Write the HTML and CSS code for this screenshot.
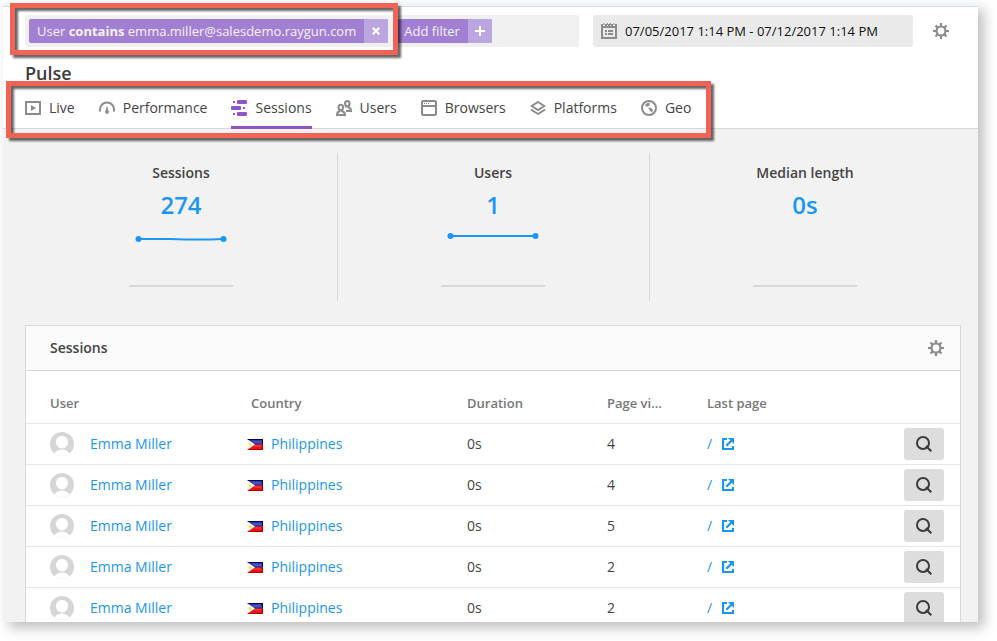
FILE: index.html
```html
<!DOCTYPE html>
<html lang="en">
<head>
  <meta charset="UTF-8" />
  <title>Pulse - Sessions</title>
  <link rel="stylesheet" href="styles.css">
</head>
<body>
  <!-- shared icons -->
  <svg class="sprite" aria-hidden="true">
    <symbol id="gear" viewBox="0 0 16 16">
      <circle cx="8" cy="8" r="4.500" fill="none" stroke="currentColor" stroke-width="2.200" />
      <path d="M8 0v3.500M8 12.500V16M0 8h3.500M12.500 8H16M2.500 2.500l2.300 2.300M11.200 11.200l2.300 2.300M13.500 2.500l-2.300 2.300M4.800 11.200l-2.300 2.300" stroke="currentColor" stroke-width="2.200" />
    </symbol>
    <symbol id="avatar" viewBox="0 0 24 24">
      <circle cx="12" cy="12" r="12" fill="#d6d6d6" />
      <path d="M12 4c3.600 0 6 2.500 6 6s-2.600 6.500-6 6.500S6 13.500 6 10s2.400-6 6-6z" fill="#fff" />
      <path d="M4.500 21.400C6.500 18.600 9 17.500 12 17.500s5.500 1.100 7.500 3.900A12 12 0 0 1 12 24a12 12 0 0 1-7.500-2.600z" fill="#fff" />
    </symbol>
    <symbol id="flag" viewBox="0 0 16 11">
      <path d="M0 0h16v6H0z" fill="#3338a4" />
      <path d="M0 0h16v1H0zM15 0h1v5.500h-1z" fill="#000066" />
      <path d="M0 5.500h16V11H0z" fill="#ee1111" />
      <path d="M1 10h15v1H1zM15 5.500h1V11h-1z" fill="#b80000" />
      <path d="M6 2.500h8v1H6z" fill="#6468c0" />
      <path d="M7 6.500h7v1H7z" fill="#ff5050" />
      <path d="M0 0l8 5.500L0 11z" fill="#fbf9ee" />
      <path d="M1.500 5.500h3M3 4v3" stroke="#f2e456" stroke-width="1.500" />
    </symbol>
    <symbol id="external" viewBox="0 0 12 12">
      <path d="M5 1H1v10h10V8" fill="none" stroke="currentColor" stroke-width="2.200" />
      <path d="M4.300 7.700L9.500 2.500" stroke="currentColor" stroke-width="2.200" />
      <path d="M6 0h6v6z" fill="currentColor" />
    </symbol>
    <symbol id="search" viewBox="0 0 16 16">
      <circle cx="7" cy="7" r="6" fill="none" stroke="currentColor" stroke-width="2" />
      <path d="M10 10l5.300 5.300" stroke="currentColor" stroke-width="2" />
    </symbol>
  </svg>

  <div class="app">
    <header class="header">
      <div class="toolbar">
        <div class="filters">
          <span class="tag">
            <span class="tag-text">User <b>contains</b> emma.miller@salesdemo.raygun.com</span>
            <button class="tag-btn" aria-label="Remove filter">
              <svg width="8" height="8" viewBox="0 0 8 8"><path d="M.7.7l6.600 6.600M7.300.7L.7 7.300" stroke="#fff" stroke-width="2" /></svg>
            </button>
          </span>
          <button class="tag">
            <span class="tag-text">Add filter</span>
            <span class="tag-btn">
              <svg width="10" height="10" viewBox="0 0 10 10"><path d="M5 0v10M0 5h10" stroke="#fff" stroke-width="2" /></svg>
            </span>
          </button>
        </div>
        <button class="date">
          <svg width="16" height="16" viewBox="0 0 16 16">
            <path d="M0 1h2v2h2V1h2v2h1V1h2v2h1V1h2v2h2V1h2v15H0z" fill="#8c8c8c" />
            <path d="M3 0v2M6.500 0v2M9.500 0v2M13 0v2" stroke="#8c8c8c" stroke-width="1" />
            <path d="M2 5h12v9H2z" fill="#eaeaea" />
            <path d="M4 8h2M7 8h5M4 11h2M7 11h5" stroke="#8c8c8c" stroke-width="2" />
          </svg>
          07/05/2017 1:14 PM - 07/12/2017 1:14 PM
        </button>
        <button class="icon-btn" aria-label="Settings"><svg width="16" height="16"><use href="#gear" /></svg></button>
      </div>

      <h1>Pulse</h1>

      <nav class="tabs">
        <a href="#">
          <svg width="16" height="16" viewBox="0 0 16 16"><path d="M1 2h14v12H1z" fill="none" stroke="currentColor" stroke-width="2" /><path d="M6 5l5 3-5 3z" fill="currentColor" /></svg>
          Live
        </a>
        <a href="#">
          <svg width="16" height="16" viewBox="0 0 16 16"><path d="M1 11.500V9.500a7 7 0 0 1 14 0v2" fill="none" stroke="currentColor" stroke-width="2" /><path d="M8 5.500l1.300 5a1.900 1.900 0 1 1-2.600 0z" fill="currentColor" /></svg>
          Performance
        </a>
        <a href="#" class="active">
          <svg width="16" height="16" viewBox="0 0 16 16">
            <rect x="6" y="0" width="10" height="4" rx="1" fill="currentColor" />
            <rect x="0" y="6" width="10" height="4" rx="1" fill="currentColor" />
            <rect x="6" y="12" width="10" height="4" rx="1" fill="currentColor" />
            <path d="M2 2h2M12 8h2M2 14h2" stroke="currentColor" stroke-width="2" />
          </svg>
          Sessions
        </a>
        <a href="#">
          <svg width="16" height="16" viewBox="0 0 16 16" fill="none" stroke="currentColor" stroke-width="2">
            <ellipse cx="11.300" cy="3.600" rx="2.300" ry="2.600" />
            <path d="M10 6.300v1.300M12.700 6.200v1.300c1.700.5 2.300 1 2.300 3.400H10" />
            <ellipse cx="4.800" cy="7.400" rx="2.300" ry="2.600" />
            <path d="M3.600 10v1.300C1.700 11.800 1 12.500 1 15h8c0-2.500-.8-3.200-2.800-3.700V10" />
          </svg>
          Users
        </a>
        <a href="#">
          <svg width="16" height="16" viewBox="0 0 16 16"><rect x="1" y="1" width="14" height="14" rx="1" fill="none" stroke="currentColor" stroke-width="2" /><path d="M1 6h14" stroke="currentColor" stroke-width="2" /><path d="M3 3.500h6" stroke="currentColor" stroke-width="1" stroke-dasharray="1 1" /></svg>
          Browsers
        </a>
        <a href="#">
          <svg width="16" height="16" viewBox="0 0 16 16" fill="none" stroke="currentColor" stroke-width="1.900"><path d="M8 2l6.300 4L8 10 1.700 6z" /><path d="M1 9.600l7 4.400 7-4.400" /></svg>
          Platforms
        </a>
        <a href="#">
          <svg width="16" height="16" viewBox="0 0 16 16"><circle cx="8" cy="8" r="7" fill="none" stroke="currentColor" stroke-width="2" /><path d="M4 5l2.500-2 3-.5L8 4l1 1-2.500 1.500L5 6.500zM7 7.500l3 .5 2.300 2-1.800 2.500L9 10.500z" fill="currentColor" /></svg>
          Geo
        </a>
      </nav>
    </header>

    <main>
      <section class="stats">
        <div class="stat">
          <h2>Sessions</h2>
          <p>274</p>
          <svg class="spark" viewBox="0 0 104 60">
            <path d="M9 14h32q30 1 53 0" fill="none" stroke="currentColor" stroke-width="2" />
            <circle cx="9.500" cy="14" r="3" fill="currentColor" /><circle cx="94.500" cy="14" r="3" fill="currentColor" />
          </svg>
        </div>
        <div class="stat">
          <h2>Users</h2>
          <p>1</p>
          <svg class="spark" viewBox="0 0 104 60">
            <path d="M9 11h85" stroke="currentColor" stroke-width="2" />
            <circle cx="9.500" cy="11" r="3" fill="currentColor" /><circle cx="94.500" cy="11" r="3" fill="currentColor" />
          </svg>
        </div>
        <div class="stat">
          <h2>Median length</h2>
          <p>0s</p>
          <svg class="spark" viewBox="0 0 104 60"></svg>
        </div>
      </section>

      <section class="panel">
        <div class="panel-head">
          <h2>Sessions</h2>
          <button class="icon-btn" aria-label="Table settings"><svg width="16" height="16"><use href="#gear" /></svg></button>
        </div>
        <table>
          <thead>
            <tr>
              <th class="user">User</th>
              <th class="country">Country</th>
              <th class="duration">Duration</th>
              <th class="views">Page vi...</th>
              <th>Last page</th>
              <td class="action"></td>
            </tr>
          </thead>
          <tbody>
            <tr>
              <td class="user"><a href="#"><svg width="24" height="24"><use href="#avatar" /></svg>Emma Miller</a></td>
              <td><a href="#" class="place"><svg width="16" height="11"><use href="#flag" /></svg>Philippines</a></td>
              <td>0s</td>
              <td>4</td>
              <td><a href="#" class="page">/<svg width="12" height="12"><use href="#external" /></svg></a></td>
              <td class="action"><button class="view" aria-label="View session"><svg width="16" height="16"><use href="#search" /></svg></button></td>
            </tr>
            <tr>
              <td class="user"><a href="#"><svg width="24" height="24"><use href="#avatar" /></svg>Emma Miller</a></td>
              <td><a href="#" class="place"><svg width="16" height="11"><use href="#flag" /></svg>Philippines</a></td>
              <td>0s</td>
              <td>4</td>
              <td><a href="#" class="page">/<svg width="12" height="12"><use href="#external" /></svg></a></td>
              <td class="action"><button class="view" aria-label="View session"><svg width="16" height="16"><use href="#search" /></svg></button></td>
            </tr>
            <tr>
              <td class="user"><a href="#"><svg width="24" height="24"><use href="#avatar" /></svg>Emma Miller</a></td>
              <td><a href="#" class="place"><svg width="16" height="11"><use href="#flag" /></svg>Philippines</a></td>
              <td>0s</td>
              <td>5</td>
              <td><a href="#" class="page">/<svg width="12" height="12"><use href="#external" /></svg></a></td>
              <td class="action"><button class="view" aria-label="View session"><svg width="16" height="16"><use href="#search" /></svg></button></td>
            </tr>
            <tr>
              <td class="user"><a href="#"><svg width="24" height="24"><use href="#avatar" /></svg>Emma Miller</a></td>
              <td><a href="#" class="place"><svg width="16" height="11"><use href="#flag" /></svg>Philippines</a></td>
              <td>0s</td>
              <td>2</td>
              <td><a href="#" class="page">/<svg width="12" height="12"><use href="#external" /></svg></a></td>
              <td class="action"><button class="view" aria-label="View session"><svg width="16" height="16"><use href="#search" /></svg></button></td>
            </tr>
            <tr>
              <td class="user"><a href="#"><svg width="24" height="24"><use href="#avatar" /></svg>Emma Miller</a></td>
              <td><a href="#" class="place"><svg width="16" height="11"><use href="#flag" /></svg>Philippines</a></td>
              <td>0s</td>
              <td>2</td>
              <td><a href="#" class="page">/<svg width="12" height="12"><use href="#external" /></svg></a></td>
              <td class="action"><button class="view" aria-label="View session"><svg width="16" height="16"><use href="#search" /></svg></button></td>
            </tr>
          </tbody>
        </table>
      </section>
    </main>
  </div>

  <!-- highlight boxes over the filter and the tabs -->
  <div class="callout callout-filter"></div>
  <div class="callout callout-tabs"></div>
</body>
</html>
```
FILE: styles.css
```css
* {
  box-sizing: border-box;
  margin: 0;
  padding: 0;
}

body {
  position: relative;
  height: 100vh;
  padding: 3px 19px 19px 3px;
  overflow: hidden;
  background: #fff;
  font-family: "Open Sans", "Noto Sans", sans-serif;
  font-size: 14px;
  line-height: 20px;
  color: #444;
}

a {
  color: #1a96ee;
  text-decoration: none;
}

button {
  border: none;
  background: none;
  font: inherit;
  color: inherit;
  cursor: pointer;
}

svg {
  display: block;
  flex: none;
}

.sprite {
  position: absolute;
  width: 0;
  height: 0;
}

.app {
  height: 100%;
  overflow: hidden;
  background: #f2f2f2;
  box-shadow: 6px 6px 12px rgba(0, 0, 0, 0.25);
}

/* header */
.header {
  padding: 0 22px;
  background: #fff;
  border-top: 3px solid #eef6ff;
  border-bottom: 1px solid #d8d8d8;
}

.toolbar {
  display: flex;
  align-items: center;
  margin: 0 -22px;
  padding: 8px 29px 0 22px;
  border-top: 1px solid #d8d8d8;
}

.filters {
  display: flex;
  flex: 1;
  gap: 8px;
  padding: 4px;
  background: #f0f0f0;
  border-radius: 3px;
}

.tag {
  display: flex;
  height: 24px;
  background: #a180d3;
  border-radius: 2px;
  overflow: hidden;
  color: #f6f2fc;
  font-size: 13px;
  line-height: 24px;
  white-space: nowrap;
}

.tag b {
  font-weight: 700;
}

.tag-text {
  padding: 0 8px;
}

.tag-btn {
  display: flex;
  align-items: center;
  justify-content: center;
  width: 24px;
  height: 24px;
  background: #bba6e0;
}

.date {
  display: flex;
  align-items: center;
  gap: 8px;
  width: 320px;
  height: 32px;
  margin: 0 20px 0 14px;
  padding: 0 8px;
  background: #eaeaea;
  border-radius: 3px;
  color: #111;
  font-size: 13px;
}

.icon-btn {
  color: #8c8c8c;
}

h1 {
  padding-top: 14px;
  font-size: 18px;
  font-weight: 600;
  line-height: 24px;
  color: #3b3b3b;
}

.tabs {
  display: flex;
  gap: 24px;
  margin-bottom: -1px;
}

.tabs a {
  display: flex;
  align-items: center;
  gap: 8px;
  height: 44px;
  padding-top: 5px;
  border-bottom: 3px solid transparent;
  color: #444;
}

.tabs svg {
  color: #8c8c8c;
}

.tabs .active {
  border-color: #9155cb;
}

.tabs .active svg {
  color: #9155cb;
}

/* stats */
main {
  padding: 24px 17px 0 22px;
}

.stats {
  display: grid;
  grid-template-columns: repeat(3, 1fr);
  margin-bottom: 24px;
}

.stat {
  display: flex;
  flex-direction: column;
  align-items: center;
  height: 148px;
  padding-top: 10px;
}

.stat + .stat {
  padding-right: 1px;
  border-left: 1px solid #d8d8d8;
}

h2 {
  font-size: 14px;
  font-weight: 600;
  color: #444;
}

.stat p {
  padding-top: 6px;
  font-size: 24px;
  font-weight: 600;
  line-height: 32px;
  color: #1a96f5;
}

.spark {
  width: 104px;
  height: 62px;
  margin-top: 4px;
  border-bottom: 2px solid #d8d8d8;
  color: #1a96f5;
}

/* sessions table */
.panel {
  background: #fff;
  border: 1px solid #d8d8d8;
}

.panel-head {
  display: flex;
  align-items: center;
  justify-content: space-between;
  height: 45px;
  padding: 0 16px 0 24px;
  background: #fbfbfb;
  border-bottom: 1px solid #d8d8d8;
}

table {
  width: 100%;
  table-layout: fixed;
  border-collapse: separate;
  border-spacing: 0;
}

th {
  height: 53px;
  padding-top: 12px;
  border-bottom: 1px solid #e6e6e6;
  text-align: left;
  font-size: 13px;
  font-weight: 600;
  color: #777;
}

td {
  height: 41px;
  border-bottom: 1px solid #e6e6e6;
}

td a {
  display: flex;
  align-items: center;
}

.user {
  width: 221px;
  padding-left: 24px;
}

.user a {
  gap: 16px;
}

.country {
  width: 220px;
  padding-left: 4px;
}

.place {
  gap: 8px;
}

.duration {
  width: 140px;
}

.views {
  width: 100px;
}

.page {
  gap: 10px;
}

.action {
  width: 80px;
  padding-right: 16px;
}

.view {
  display: flex;
  align-items: center;
  justify-content: center;
  width: 40px;
  height: 32px;
  margin-left: auto;
  background: #ddd;
  border-radius: 3px;
  color: #3b3b3b;
}

/* callouts */
.callout {
  position: absolute;
  border: 5px solid #f26355;
  filter: drop-shadow(3px 3px 1px rgba(0, 0, 0, 0.6));
  pointer-events: none;
}

.callout-filter {
  top: 3px;
  left: 10px;
  width: 388px;
  height: 52px;
}

.callout-tabs {
  top: 81px;
  left: 6px;
  width: 705px;
  height: 57px;
}
```
